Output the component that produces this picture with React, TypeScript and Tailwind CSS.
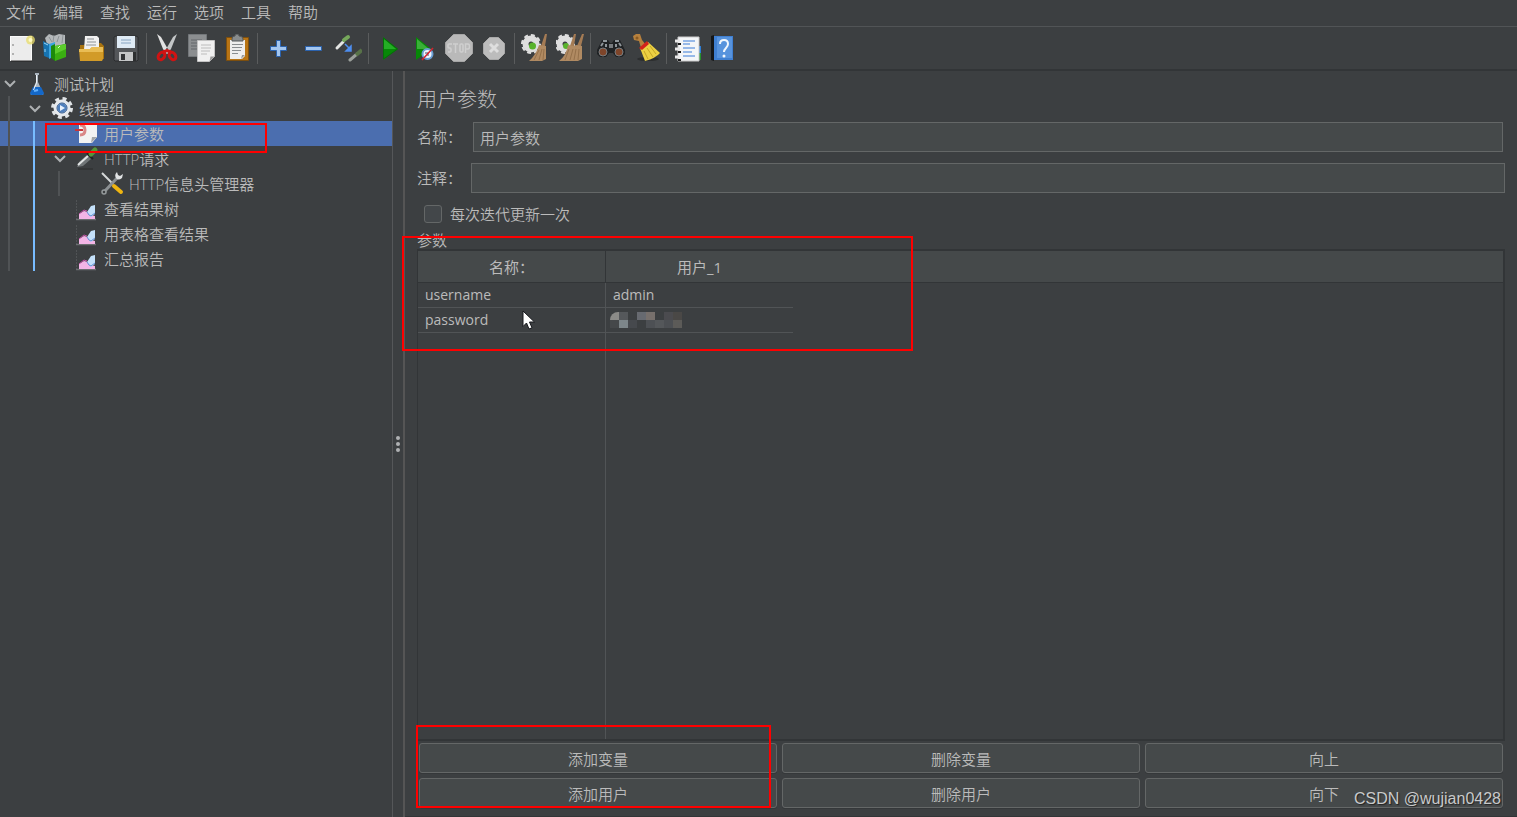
import type { ReactNode } from "react";

const ICONS: Record<string, ReactNode> = {
  new: (
    <>
      <rect x="3.5" y="2.5" width="21" height="24" fill="#ececec" stroke="#fafafa" />
      <path d="M5 11h2M5 20h2" stroke="#777" />
      <path d="M4 27h21" stroke="#222" />
      <circle cx="23.5" cy="6" r="4.5" fill="#e8dc6a" opacity=".75" />
      <circle cx="23.5" cy="6" r="2" fill="#fffbc4" />
    </>
  ),
  templates: (
    <>
      <path d="M3 4l4-4 5 2 5-2 6 1v9l-9 3-9-3z" fill="#b4b8ba" />
      <path d="M7 3l3 5M12 1l-1 7M17 2l-2 6M21 1l-1 8" stroke="#8d9396" />
      <path d="M1 7l6 3v14l-5-2z" fill="#1673b1" />
      <path d="M7 10l6-2v14l-6 3z" fill="#3ba3df" />
      <path d="M2 9l4 2M3 15v3" stroke="#9bd4f5" />
      <path d="M9 12l4-2v17l-4-3z" fill="#1d8a0a" />
      <path d="M13 12l11-2v13l-11 4z" fill="#3aae12" />
      <path d="M13 12l11-2v5l-11 5z" fill="#5ccc2c" />
      <path d="M16 14l2-2" stroke="#d9ffca" />
    </>
  ),
  open: (
    <>
      <path d="M3 11h4l2-2h15l3 3v13H3z" fill="#a8730f" />
      <path d="M8 2h12l2 2v12H7z" fill="#f1f1f1" />
      <path d="M10 5h7M10 8h9M9 11h10" stroke="#8d9296" />
      <path d="M2 15h11l2-2h11v12l-1 2H3z" fill="#d29b28" />
      <path d="M2 15h11l2-2h11v5H2z" fill="#e9bd55" />
    </>
  ),
  save: (
    <>
      <path d="M2 3l2-1h20l2 1v23l-1 1H3l-1-1z" fill="#54575a" stroke="#2b2d2e" />
      <path d="M5 2h18v12H5z" fill="#dfebf5" />
      <path d="M9 6h10M9 9h10" stroke="#88a5c2" />
      <path d="M7 18h14v9H7z" fill="#c4c6c7" />
      <path d="M9 20h4v6H9z" fill="#303234" />
      <path d="M21 18h3v9h-3z" fill="#2d2f30" />
    </>
  ),
  cut: (
    <>
      <path d="M4 0l4 3 8 14-2 3-4-5z" fill="#e2e2e2" />
      <path d="M24 0l-4 3-8 14 2 3 4-5z" fill="#c3c6c7" />
      <circle cx="14" cy="15" r="1" fill="#555" />
      <ellipse cx="8.500" cy="22" rx="3" ry="4" transform="rotate(35 8.500 22)" fill="none" stroke="#d01313" strokeWidth="3" />
      <ellipse cx="19.500" cy="22" rx="3" ry="4" transform="rotate(-35 19.500 22)" fill="none" stroke="#d01313" strokeWidth="3" />
      <path d="M10 18l4-1.500 4 1.500" fill="none" stroke="#d01313" strokeWidth="3" />
    </>
  ),
  copy: (
    <>
      <path d="M.5.5h18v22H.5z" fill="#8b8e90" stroke="#73777a" />
      <path d="M3 6h11M3 9h11M3 12h6M3 15h6" stroke="#63676a" />
      <path d="M9.500 6.500h17v16l-5 5h-12z" fill="#f0f0f0" stroke="#c3c3c3" />
      <path d="M13 11h10M13 14h10M13 17h9M13 20h6" stroke="#bcbcbc" />
      <path d="M21.500 27.500l1-5h4z" fill="#999" />
    </>
  ),
  paste: (
    <>
      <path d="M3.500 3.500h22v23h-22z" fill="#b87414" stroke="#7d4f0e" />
      <path d="M7 6h15v16l-3 3H7z" fill="#eee" />
      <path d="M9 5q0-3 3-3 0-2 2-2t2 2q4 0 4 3v2H9z" fill="#888c8d" stroke="#55595a" />
      <path d="M9 10.500h11M9 13.500h10M9 16.500h9M9 19.500h6" stroke="#898d90" />
      <path d="M18 25l1-4h3z" fill="#999" />
    </>
  ),
  plus: (
    <path d="M12.500 6.500h4v6h6v4h-6v6h-4v-6h-6v-4h6z" fill="#a3c6f0" stroke="#2b62ad" />
  ),
  minus: <path d="M6.500 12.500h16v4h-16z" fill="#a3c6f0" stroke="#2b62ad" />,
  toggle: (
    <>
      <path d="M3 14l6-6" stroke="#e4e6e4" strokeWidth="3" strokeLinecap="round" />
      <path d="M10 6l4-3" stroke="#76a85b" strokeWidth="4" strokeLinecap="round" />
      <path d="M11 10l4 4M17 12v5h-5z" fill="#4e8ff0" stroke="#4e8ff0" strokeWidth="1.500" />
      <path d="M16 26l7-6" stroke="#9ba09b" strokeWidth="3" strokeLinecap="round" />
      <path d="M22 21l6-5" stroke="#587248" strokeWidth="4" />
    </>
  ),
  start: (
    <>
      <path d="M8 3v23l15-11z" fill="#078807" />
      <path d="M9 5v10h12z" fill="#24ae25" />
      <path d="M8.500 4v21l14-10z" fill="none" stroke="#056e08" />
    </>
  ),
  startNoPause: (
    <>
      <path d="M6 3v23l15-11z" fill="#078807" />
      <path d="M7 5v10h12z" fill="#3aaf38" />
      <circle cx="17.500" cy="20" r="5" fill="#eef5ff" stroke="#6b9fd4" strokeWidth="2" />
      <path d="M15 19h3v3" fill="none" stroke="#456" />
      <path d="M12 26L23 14" stroke="#d6232d" strokeWidth="1.500" />
    </>
  ),
  stop: (
    <>
      <path d="M8.500.5h11l8 8v11l-8 8h-11l-8-8v-11z" fill="#b9b9b9" stroke="#a6a6a6" />
      <path
        d="M7 10H4q-1 0-1 1v2q0 1 1 1h1q1 0 1 1v2q0 1-1 1H3M8 10h5M10.500 10v9M15 11v6q0 1 1 1h1q1 0 1-1v-6q0-1-1-1h-1q-1 0-1 1M20.500 19v-9H23q1.500 0 1.500 2.500T23 15h-2"
        fill="none"
        stroke="#cfcfcf"
        strokeWidth="1.500"
      />
    </>
  ),
  shutdown: (
    <>
      <path d="M9.500 3.500h9l6 6v10l-6 6h-9l-6-6v-10z" fill="#bcbcbc" stroke="#a9a9a9" />
      <path d="M10 10l8 8M18 10l-8 8" stroke="#dedede" strokeWidth="3" />
    </>
  ),
  clear: (
    <>
      <circle cx="10" cy="10" r="5.500" fill="none" stroke="#dedede" strokeWidth="6" />
      <circle cx="10" cy="10" r="9" fill="none" stroke="#dedede" strokeWidth="2" strokeDasharray="4 3" />
      <circle cx="11.500" cy="12" r="3.500" fill="#59b32c" />
      <path d="M24 0h2l-2 12h-4z" fill="#a47b54" />
      <path d="M18 11l7 1v13l-4 2H8q7-6 10-16z" fill="#b08a62" />
      <path d="M18 16l-5 10M21 15l-3 11M23 15l-1 11" stroke="#94704a" />
    </>
  ),
  clearAll: (
    <>
      <circle cx="9" cy="10" r="5.500" fill="none" stroke="#dedede" strokeWidth="6" />
      <circle cx="9" cy="10" r="9" fill="none" stroke="#dedede" strokeWidth="2" strokeDasharray="4 3" />
      <circle cx="10" cy="12" r="3" fill="#59b32c" />
      <path d="M18 0h2l-2 12h-4zM26 0h2l-3 12h-4z" fill="#a47b54" />
      <path d="M12 11l6 1 2-1 6 1v13l-4 2H3q7-5 9-16z" fill="#b08a62" />
      <path d="M13 15l-4 11M17 15l-3 11M20 15l-2 11M23 15l-1 11" stroke="#94704a" />
    </>
  ),
  search: (
    <>
      <path d="M5 6h6l2 3h2l2-3h6l5 10v4l-3 3h-6l-3-4h-4l-3 4H3l-3-3v-4z" fill="#1f2224" />
      <path d="M6 7h4M18 7h4M4 12l2-3M24 12l-2-3M9 10v3M19 10v3" stroke="#8f969a" strokeWidth="2" />
      <circle cx="6" cy="18" r="4" fill="#7e452a" stroke="#777c7f" />
      <circle cx="22" cy="18" r="4" fill="#7e452a" stroke="#777c7f" />
      <path d="M12 10h4v4h-4z" fill="#777b7e" />
    </>
  ),
  searchReset: (
    <>
      <ellipse cx="16" cy="25" rx="11" ry="2" fill="#2c2e2f" />
      <path d="M1 2l3-2h4l2 6 4 5-5 3-2-7-5-1z" fill="#b6803d" />
      <circle cx="5" cy="4" r="1.500" fill="#8a5a22" />
      <path d="M8 14l8-6 12 11q-4 5-15 8z" fill="#ecd042" />
      <path d="M12 17l4 8M15 14l6 9M18 12l6 8" stroke="#c5a524" />
      <path d="M7 14l8-7 2 3-7 6z" fill="#d3221c" />
    </>
  ),
  functions: (
    <>
      <path d="M25 12h3v7h-3z" fill="#2c7ed6" />
      <path d="M25 19h3v7h-3z" fill="#258f2c" />
      <path d="M5 3h21v24H5z" fill="#f4f6f8" stroke="#ccc" />
      <path d="M2 7h5M2 15h5M2 23h5" stroke="#e8e8e8" strokeWidth="3" />
      <path d="M5 10h3M5 18h3M5 26h3" stroke="#1b1b1b" strokeWidth="2" />
      <path d="M10 7h12M10 10h7M10 14h12M10 18h9M10 22h12" stroke="#3b7dd8" />
    </>
  ),
  help: (
    <>
      <path d="M3 2l3-1v26l-3-1z" fill="#151719" />
      <path d="M6 2h19v24H6z" fill="#3f7fd1" />
      <path d="M9 3h15v21H9z" fill="#5793dd" />
      <path d="M12 10q0-4 4-4t4 4q0 2-2 4t-2 4" fill="none" stroke="#f0f6fd" strokeWidth="2" />
      <circle cx="16" cy="22" r="1.500" fill="#f0f6fd" />
    </>
  ),
};

const TREE_ICONS: Record<string, ReactNode> = {
  plan: (
    <>
      <path d="M10 2h4v2h-1v7l5 11q1 2-1 2H7q-2 0-1-2l5-11V4h-1z" fill="#a9b4be" />
      <path d="M8 16h8l3 6q0 2-2 2H7q-2 0-2-2z" fill="#1468c9" />
      <path d="M11.500 4v8l-3 7" fill="none" stroke="#eef3f7" />
      <path d="M9 20l4-1" stroke="#5fb0ff" strokeWidth="2" />
    </>
  ),
  threads: (
    <>
      <circle cx="12" cy="12" r="9.500" fill="none" stroke="#dfe3e6" strokeWidth="3" strokeDasharray="4 3.500" />
      <circle cx="12" cy="12" r="6.500" fill="#4e7fbd" stroke="#e6e9ec" strokeWidth="4" />
      <circle cx="12" cy="12" r="5" fill="none" stroke="#2d578f" />
      <path d="M10 9l5 3-5 3z" fill="#e8f1fc" />
    </>
  ),
  params: (
    <>
      <path d="M4 2h18v14l-5 6H4z" fill="#f2f2f2" />
      <path d="M16 22l1-6h5z" fill="#a4a7a9" />
      <path d="M5 4q5 0 5 5t-5 5" fill="none" stroke="#d98787" strokeWidth="3" />
      <path d="M0 9h8" stroke="#c5363a" strokeWidth="2" />
    </>
  ),
  sampler: (
    <>
      <path d="M2 21l2-5 8-7 4 4-8 7z" fill="#707577" />
      <path d="M3 19l10-9" stroke="#e1e4e4" strokeWidth="2" />
      <path d="M12 7l6 6" stroke="#222" strokeWidth="2" />
      <path d="M16 8l4-4" stroke="#54963c" strokeWidth="5" strokeLinecap="round" />
      <path d="M3 23h15" stroke="#2a2c2d" />
    </>
  ),
  config: (
    <>
      <path d="M2 2l11 11" stroke="#d5d8d9" strokeWidth="2" />
      <path d="M4 21L18 6" stroke="#8c9193" strokeWidth="3" />
      <path d="M17 1q-3 3-1 6t6 0l1-4-3 2-2-1z" fill="#e1e3e4" />
      <circle cx="4" cy="21" r="2" fill="#3c3f41" stroke="#94999b" strokeWidth="1.500" />
      <path d="M14 15l7 6" stroke="#efb511" strokeWidth="4" strokeLinecap="round" />
    </>
  ),
  listener: (
    <>
      <path d="M1.500 4v20" stroke="#505355" strokeDasharray="2 1" />
      <path d="M1 23.500h20" stroke="#6b6e70" strokeWidth="1.500" />
      <path d="M4 23v-5l5-3 4 1 3 3 4 1v3z" fill="#f3b5e6" />
      <path d="M4 18l5-4 3 1" fill="none" stroke="#c054a5" />
      <path d="M12 16l4-6 4-1v9l-4 3z" fill="#c4e1fa" />
      <path d="M12 16l2 3 2 1 4-3" fill="none" stroke="#5f8fd8" />
    </>
  ),
};

const MENUS = ["文件", "编辑", "查找", "运行", "选项", "工具", "帮助"];

const TOOLBAR = [
  ["new", "templates", "open", "save"],
  ["cut", "copy", "paste"],
  ["plus", "minus", "toggle"],
  ["start", "startNoPause", "stop", "shutdown"],
  ["clear", "clearAll"],
  ["search", "searchReset"],
  ["functions", "help"],
];

type Guide = "gray" | "blue";

interface TreeNode {
  label: string;
  icon: string;
  guides: Guide[];
  open?: boolean;
  selected?: boolean;
}

const NODES: TreeNode[] = [
  { label: "测试计划", icon: "plan", guides: [], open: true },
  { label: "线程组", icon: "threads", guides: ["gray"], open: true },
  { label: "用户参数", icon: "params", guides: ["gray", "blue"], selected: true },
  { label: "HTTP请求", icon: "sampler", guides: ["gray", "blue"], open: true },
  { label: "HTTP信息头管理器", icon: "config", guides: ["gray", "blue", "gray"] },
  { label: "查看结果树", icon: "listener", guides: ["gray", "blue"] },
  { label: "用表格查看结果", icon: "listener", guides: ["gray", "blue"] },
  { label: "汇总报告", icon: "listener", guides: ["gray", "blue"] },
];

const ACTIONS = ["添加变量", "删除变量", "向上", "添加用户", "删除用户", "向下"];

function MenuBar() {
  return (
    <nav className="flex h-[27px] shrink-0 items-center gap-[17px] border-b border-[#515456] px-1.5 pb-0.5">
      {MENUS.map((menu) => (
        <button key={menu}>{menu}</button>
      ))}
    </nav>
  );
}

function Toolbar() {
  return (
    <div className="flex h-11 shrink-0 items-center border-b-2 border-[#323537] pl-[3px]">
      {TOOLBAR.map((group, i) => (
        <div key={i} className="flex items-center">
          {i > 0 && (
            <div className="flex w-1.5 justify-center">
              <div className="h-[31px] w-px bg-[#5a5c5d]" />
            </div>
          )}
          {group.map((name) => (
            <button key={name} aria-label={name} className="flex w-[35px] justify-center">
              <svg width="28" height="28" viewBox="0 0 28 28">{ICONS[name]}</svg>
            </button>
          ))}
        </div>
      ))}
    </div>
  );
}

function TreeRow({ node }: { node: TreeNode }) {
  return (
    <li
      role="treeitem"
      aria-selected={!!node.selected}
      className={`flex h-[25px] items-center ${node.selected ? "bg-[#4b6eaf]" : ""}`}
    >
      {node.guides.map((guide, i) => (
        <div key={i} className="h-full w-[25px] shrink-0 pl-2">
          <div className={`h-full w-0.5 ${guide === "blue" ? "bg-[#78bcff]" : "bg-[#505355]"}`} />
        </div>
      ))}
      <div className="flex w-[25px] shrink-0 pl-1">
        {node.open && (
          <svg width="12" height="12" viewBox="0 0 12 12" fill="none" stroke="#adb0b2" strokeWidth="2">
            <path d="M1 3l5 5 5-5" />
          </svg>
        )}
      </div>
      <svg width="24" height="25" viewBox="0 0 24 25" className="shrink-0">{TREE_ICONS[node.icon]}</svg>
      <span className="pl-[5px] whitespace-nowrap">{node.label}</span>
    </li>
  );
}

function TreePanel() {
  return (
    <aside className="relative w-[393px] shrink-0 border-r border-[#555759]">
      <ul role="tree">
        {NODES.map((node) => (
          <TreeRow key={node.label} node={node} />
        ))}
      </ul>
      <div className="pointer-events-none absolute top-[52px] left-[45px] h-[30px] w-[222px] border-2 border-[#f00]" />
    </aside>
  );
}

// Pixelated blocks that hide the password value
const MOSAIC = [
  "#8b8b88", "#55585b", "", "#676a70", "#77706c", "", "#4b4b4f", "#4a4846",
  "#45484a", "#7d868a", "#46494d", "", "#4d5054", "#54575a", "#4c4f53", "#5c5b58",
];

function ParamTable() {
  return (
    <div className="flex flex-1 flex-col border-2 border-l border-[#323537]">
      <table className="w-full table-fixed border-separate border-spacing-0 text-left">
        <thead>
          <tr className="h-8 bg-[#45494a] text-center">
            <th className="w-[188px] border-r border-b border-[#323537] font-normal">名称：</th>
            <th className="w-[187px] border-b border-[#323537] px-1 font-normal">用户_1</th>
            <th className="border-b border-[#323537]" />
          </tr>
        </thead>
        <tbody className="text-sm font-normal">
          <tr className="h-[25px]">
            <td className="border-r border-b border-[#515456] px-[7px]">username</td>
            <td className="border-b border-[#515456] px-[7px]">admin</td>
            <td />
          </tr>
          <tr className="h-[25px]">
            <td className="border-r border-b border-[#515456] px-[7px]">password</td>
            <td className="border-b border-[#515456] px-1">
              <div className="grid w-[72px] grid-cols-8 overflow-hidden rounded-tl-lg">
                {MOSAIC.map((color, i) => (
                  <div key={i} className="h-2" style={{ backgroundColor: color || undefined }} />
                ))}
              </div>
            </td>
            <td />
          </tr>
        </tbody>
      </table>
      <div className="w-[188px] flex-1 border-r border-[#515456]" />
    </div>
  );
}

function UserParameters() {
  return (
    <main className="relative flex min-w-0 flex-1 flex-col border-b border-[#323537] pt-3 pr-3 pb-2 pl-3">
      <h1 className="mb-1.5 h-[33px] text-xl leading-[34px] font-light">用户参数</h1>

      <div className="flex items-center pr-0.5">
        <label htmlFor="name" className="w-14">名称：</label>
        <input
          id="name"
          defaultValue="用户参数"
          className="h-[30px] min-w-0 flex-1 border border-[#646767] bg-[#45494a] px-1.5 outline-none"
        />
      </div>
      <div className="mt-[11px] flex items-center">
        <label htmlFor="comment" className="w-[54px]">注释：</label>
        <input id="comment" className="h-[30px] min-w-0 flex-1 border border-[#646767] bg-[#45494a] px-1.5 outline-none" />
      </div>

      <label className="mt-2.5 flex h-[22px] items-center gap-2 pl-[7px]">
        <input
          type="checkbox"
          className="size-[18px] appearance-none rounded-[3px] border border-[#646767] bg-[#43474a] checked:bg-[#4b6eaf]"
        />
        每次迭代更新一次
      </label>

      <h2 className="mt-1 h-5 leading-[22px]">参数</h2>
      <ParamTable />

      <div className="relative mt-0.5 grid grid-cols-3 gap-[5px] px-0.5">
        {ACTIONS.map((action) => (
          <button
            key={action}
            className="h-[30px] rounded-[3px] border border-[#646767] bg-[#45494a] pt-px shadow-[0_1px_0_#35383a]"
          >
            {action}
          </button>
        ))}
        <div className="pointer-events-none absolute -top-[18px] -left-px h-[83px] w-[355px] border-2 border-[#f00]" />
      </div>

      <div className="pointer-events-none absolute top-[165px] -left-[3px] h-[115px] w-[511px] border-2 border-[#f00]" />
      <svg width="14" height="20" viewBox="0 0 14 20" className="absolute top-[239px] left-[117px]">
        <path d="M1 1v15.500l3.500-3.500 2.500 6 3-1.200-2.500-5.800h5z" fill="#fff" stroke="#16181c" />
      </svg>
      <span className="absolute right-4 bottom-[7px] font-['Liberation_Sans'] text-base leading-5 text-[#c8cacb] [text-shadow:1px_1px_1px_#222]">
        CSDN @wujian0428
      </span>
    </main>
  );
}

export default function App() {
  return (
    <div className="flex h-screen flex-col overflow-hidden bg-[#3c3f41] font-['Open_Sans','Noto_Sans_CJK_SC',sans-serif] text-[15px] leading-5 font-[350] text-[#bbbbbb]">
      <MenuBar />
      <Toolbar />
      <div className="flex min-h-0 flex-1">
        <TreePanel />
        <div className="flex w-3 shrink-0 flex-col items-center justify-center gap-0.5 border-r-2 border-[#555555]">
          <span className="size-1 rounded-full bg-[#afb1b3]" />
          <span className="size-1 rounded-full bg-[#afb1b3]" />
          <span className="size-1 rounded-full bg-[#afb1b3]" />
        </div>
        <UserParameters />
      </div>
    </div>
  );
}
